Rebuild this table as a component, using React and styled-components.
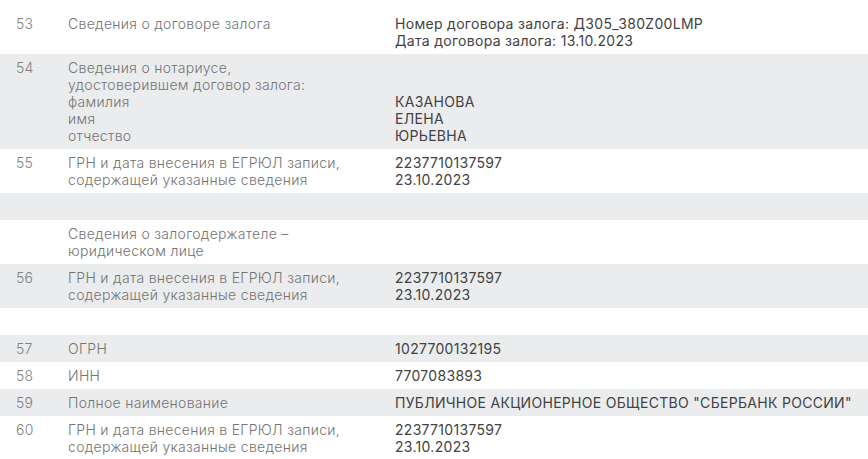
import React from "react";
import styled, { createGlobalStyle } from "styled-components";

const GlobalStyle = createGlobalStyle`
  body {
    margin: 0;
    background: #ffffff;
    font-family: Inter, "Noto Sans", sans-serif;
  }
`;

const rows = [
  {
    num: "53",
    label: ["Сведения о договоре залога"],
    value: ["Номер договора залога: Д305_380Z00LMP", "Дата договора залога: 13.10.2023"],
  },
  {
    num: "54",
    label: ["Сведения о нотариусе,", "удостоверившем договор залога:", "фамилия", "имя", "отчество"],
    value: ["", "", "КАЗАНОВА", "ЕЛЕНА", "ЮРЬЕВНА"],
  },
  {
    num: "55",
    label: ["ГРН и дата внесения в ЕГРЮЛ записи,", "содержащей указанные сведения"],
    value: ["2237710137597", "23.10.2023"],
  },
  { num: "", label: [""], value: [""] },
  {
    num: "",
    label: ["Сведения о залогодержателе –", "юридическом лице"],
    value: [""],
  },
  {
    num: "56",
    label: ["ГРН и дата внесения в ЕГРЮЛ записи,", "содержащей указанные сведения"],
    value: ["2237710137597", "23.10.2023"],
  },
  { num: "", label: [""], value: [""] },
  { num: "57", label: ["ОГРН"], value: ["1027700132195"] },
  { num: "58", label: ["ИНН"], value: ["7707083893"] },
  {
    num: "59",
    label: ["Полное наименование"],
    value: ['ПУБЛИЧНОЕ АКЦИОНЕРНОЕ ОБЩЕСТВО "СБЕРБАНК РОССИИ"'],
  },
  {
    num: "60",
    label: ["ГРН и дата внесения в ЕГРЮЛ записи,", "содержащей указанные сведения"],
    value: ["2237710137597", "23.10.2023"],
  },
];

const Table = styled.div`
  padding-top: 10px;
  display: flex;
  flex-direction: column;
`;

const Row = styled.div`
  display: grid;
  grid-template-columns: 68px 327px 1fr;
  background: ${(p) => (p.$shaded ? "#ebecee" : "#ffffff")};
  padding: 5px 0;
  font-size: 14px;
  line-height: 17px;
  letter-spacing: 0.3px;
`;

const Num = styled.div`
  padding-left: 16px;
  color: #808080;
  font-weight: 300;
`;

const Label = styled.div`
  color: #747474;
  font-weight: 300;
`;

const Value = styled.div`
  color: #424242;
  white-space: nowrap;
`;

const Line = styled.div`
  min-height: 17px;
`;

const Lines = ({ items }) =>
  items.map((t, i) => <Line key={i}>{t}</Line>);

export default function App() {
  return (
    <>
      <GlobalStyle />
      <Table>
        {rows.map((r, i) => (
          <Row key={i} $shaded={i % 2 === 1}>
            <Num>{r.num}</Num>
            <Label>
              <Lines items={r.label} />
            </Label>
            <Value>
              <Lines items={r.value} />
            </Value>
          </Row>
        ))}
      </Table>
    </>
  );
}
